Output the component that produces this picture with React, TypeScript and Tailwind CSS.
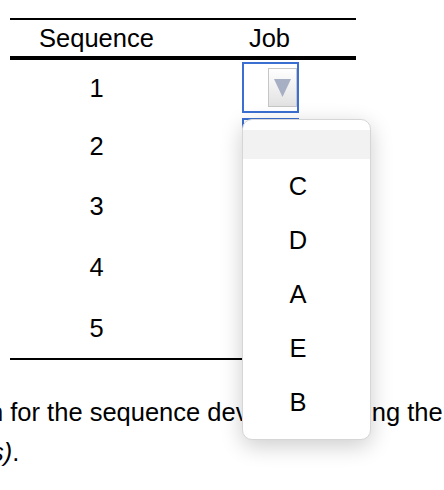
const ROW_HEIGHTS = [56, 60, 61, 61, 60]
const OPTIONS = ['C', 'D', 'A', 'E', 'B']

const JobSelect = () => {
  return (
    <div className="w-[57px] h-[51px] border-2 border-[#3b6fd1] flex justify-end items-center bg-white">
      <div className="w-[29px] h-[39px] border border-[#c6c6c6] bg-linear-to-b from-white to-[#e2e2e2] flex items-center justify-center">
        <svg width="17" height="18" viewBox="0 0 17 18">
          <polygon points="0,0 17,0 8.5,18" fill="#a6afc3" />
        </svg>
      </div>
    </div>
  )
}

const OptionsPopup = () => {
  return (
    <div className="absolute left-[242px] top-[119px] w-[129px] h-[321px] bg-white border border-[#d6d6d6] rounded-[10px] shadow-[0_6px_22px_rgba(0,0,0,0.2)] py-[10px]">
      <div className="h-[29px] bg-[#f2f2f2]" />
      {OPTIONS.map((it) => (
        <div key={it} className="h-[54px] flex items-center justify-center pr-[17px]">
          {it}
        </div>
      ))}
    </div>
  )
}

export default function App() {
  return (
    <div className="relative w-[444px] h-[490px] overflow-hidden bg-white text-black text-[25.5px] font-['Liberation_Sans',Arial,sans-serif]">
      <div className="ml-[10px] mt-[18px] w-[346px] border-t-2 border-black">
        <div className="flex h-[40px] items-center border-b-4 border-black">
          <div className="w-1/2 text-center">Sequence</div>
          <div className="w-1/2 text-center">Job</div>
        </div>
        <div className="border-b-2 border-black">
          {ROW_HEIGHTS.map((h, i) => (
            <div key={i} className="flex" style={{ height: h }}>
              <div className="w-1/2 flex items-center justify-center">{i + 1}</div>
              <div className="w-1/2 flex justify-center pt-[2px] pl-[2px]">
                <JobSelect />
              </div>
            </div>
          ))}
        </div>
      </div>
      <div className="mt-[32px] leading-[40px] whitespace-nowrap">
        <div className="ml-[-11px]">
          n for the sequence <span className="mr-[7px]">developed</span> using the
        </div>
        <div className="ml-[-9px]">
          <i>s)</i>.
        </div>
      </div>
      <OptionsPopup />
    </div>
  )
}
